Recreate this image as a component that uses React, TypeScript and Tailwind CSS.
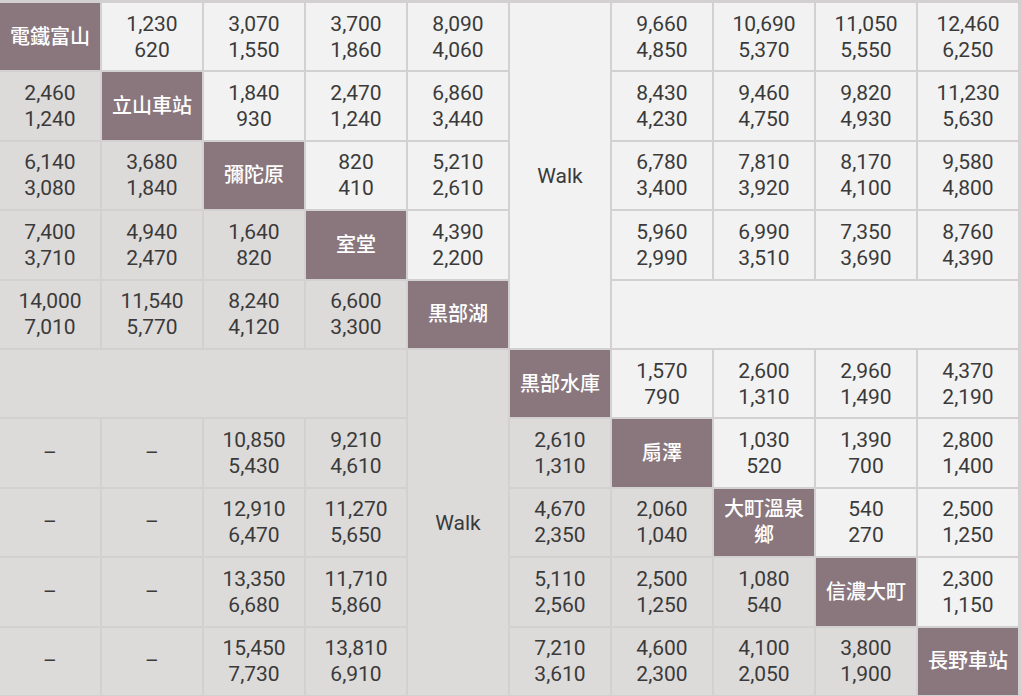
import React from "react";

type Cell = {
  text?: string;
  kind: "station" | "dark" | "light";
  col?: string;
  row?: string;
};

const st = (text: string): Cell => ({ text, kind: "station" });
const d = (text: string): Cell => ({ text, kind: "dark" });
const l = (text: string): Cell => ({ text, kind: "light" });

const rows: Cell[][] = [
  [st("電鐵富山"), l("1,230\n620"), l("3,070\n1,550"), l("3,700\n1,860"), l("8,090\n4,060"), { text: "Walk", kind: "light", row: "row-span-5" }, l("9,660\n4,850"), l("10,690\n5,370"), l("11,050\n5,550"), l("12,460\n6,250")],
  [d("2,460\n1,240"), st("立山車站"), l("1,840\n930"), l("2,470\n1,240"), l("6,860\n3,440"), l("8,430\n4,230"), l("9,460\n4,750"), l("9,820\n4,930"), l("11,230\n5,630")],
  [d("6,140\n3,080"), d("3,680\n1,840"), st("彌陀原"), l("820\n410"), l("5,210\n2,610"), l("6,780\n3,400"), l("7,810\n3,920"), l("8,170\n4,100"), l("9,580\n4,800")],
  [d("7,400\n3,710"), d("4,940\n2,470"), d("1,640\n820"), st("室堂"), l("4,390\n2,200"), l("5,960\n2,990"), l("6,990\n3,510"), l("7,350\n3,690"), l("8,760\n4,390")],
  [d("14,000\n7,010"), d("11,540\n5,770"), d("8,240\n4,120"), d("6,600\n3,300"), st("黒部湖"), { kind: "light", col: "col-span-4" }],
  [{ kind: "dark", col: "col-span-4" }, { text: "Walk", kind: "dark", row: "row-span-5" }, st("黒部水庫"), l("1,570\n790"), l("2,600\n1,310"), l("2,960\n1,490"), l("4,370\n2,190")],
  [d("–"), d("–"), d("10,850\n5,430"), d("9,210\n4,610"), d("2,610\n1,310"), st("扇澤"), l("1,030\n520"), l("1,390\n700"), l("2,800\n1,400")],
  [d("–"), d("–"), d("12,910\n6,470"), d("11,270\n5,650"), d("4,670\n2,350"), d("2,060\n1,040"), st("大町溫泉\n鄉"), l("540\n270"), l("2,500\n1,250")],
  [d("–"), d("–"), d("13,350\n6,680"), d("11,710\n5,860"), d("5,110\n2,560"), d("2,500\n1,250"), d("1,080\n540"), st("信濃大町"), l("2,300\n1,150")],
  [d("–"), d("–"), d("15,450\n7,730"), d("13,810\n6,910"), d("7,210\n3,610"), d("4,600\n2,300"), d("4,100\n2,050"), d("3,800\n1,900"), st("長野車站")],
];

const kindClass = {
  station: "bg-[#8a777e] text-white font-medium text-[20px]",
  dark: "bg-[#dddada] text-[#3a3a3a]",
  light: "bg-[#f2f2f2] text-[#3a3a3a]",
};

export default function App() {
  return (
    <div
      className="w-[1021px] h-[696px] bg-[#d2d0d0] pt-[3px] pr-[3px] pb-[1px] grid grid-cols-10 grid-rows-10 gap-[2px] text-[21px] leading-[26px]"
      style={{ fontFamily: 'Roboto, "Noto Sans CJK TC", sans-serif' }}
    >
      {rows.flat().map((c, i) => (
        <div
          key={i}
          className={`flex items-center justify-center text-center whitespace-pre-line ${kindClass[c.kind]} ${c.col ?? ""} ${c.row ?? ""}`}
        >
          {c.text}
        </div>
      ))}
    </div>
  );
}
